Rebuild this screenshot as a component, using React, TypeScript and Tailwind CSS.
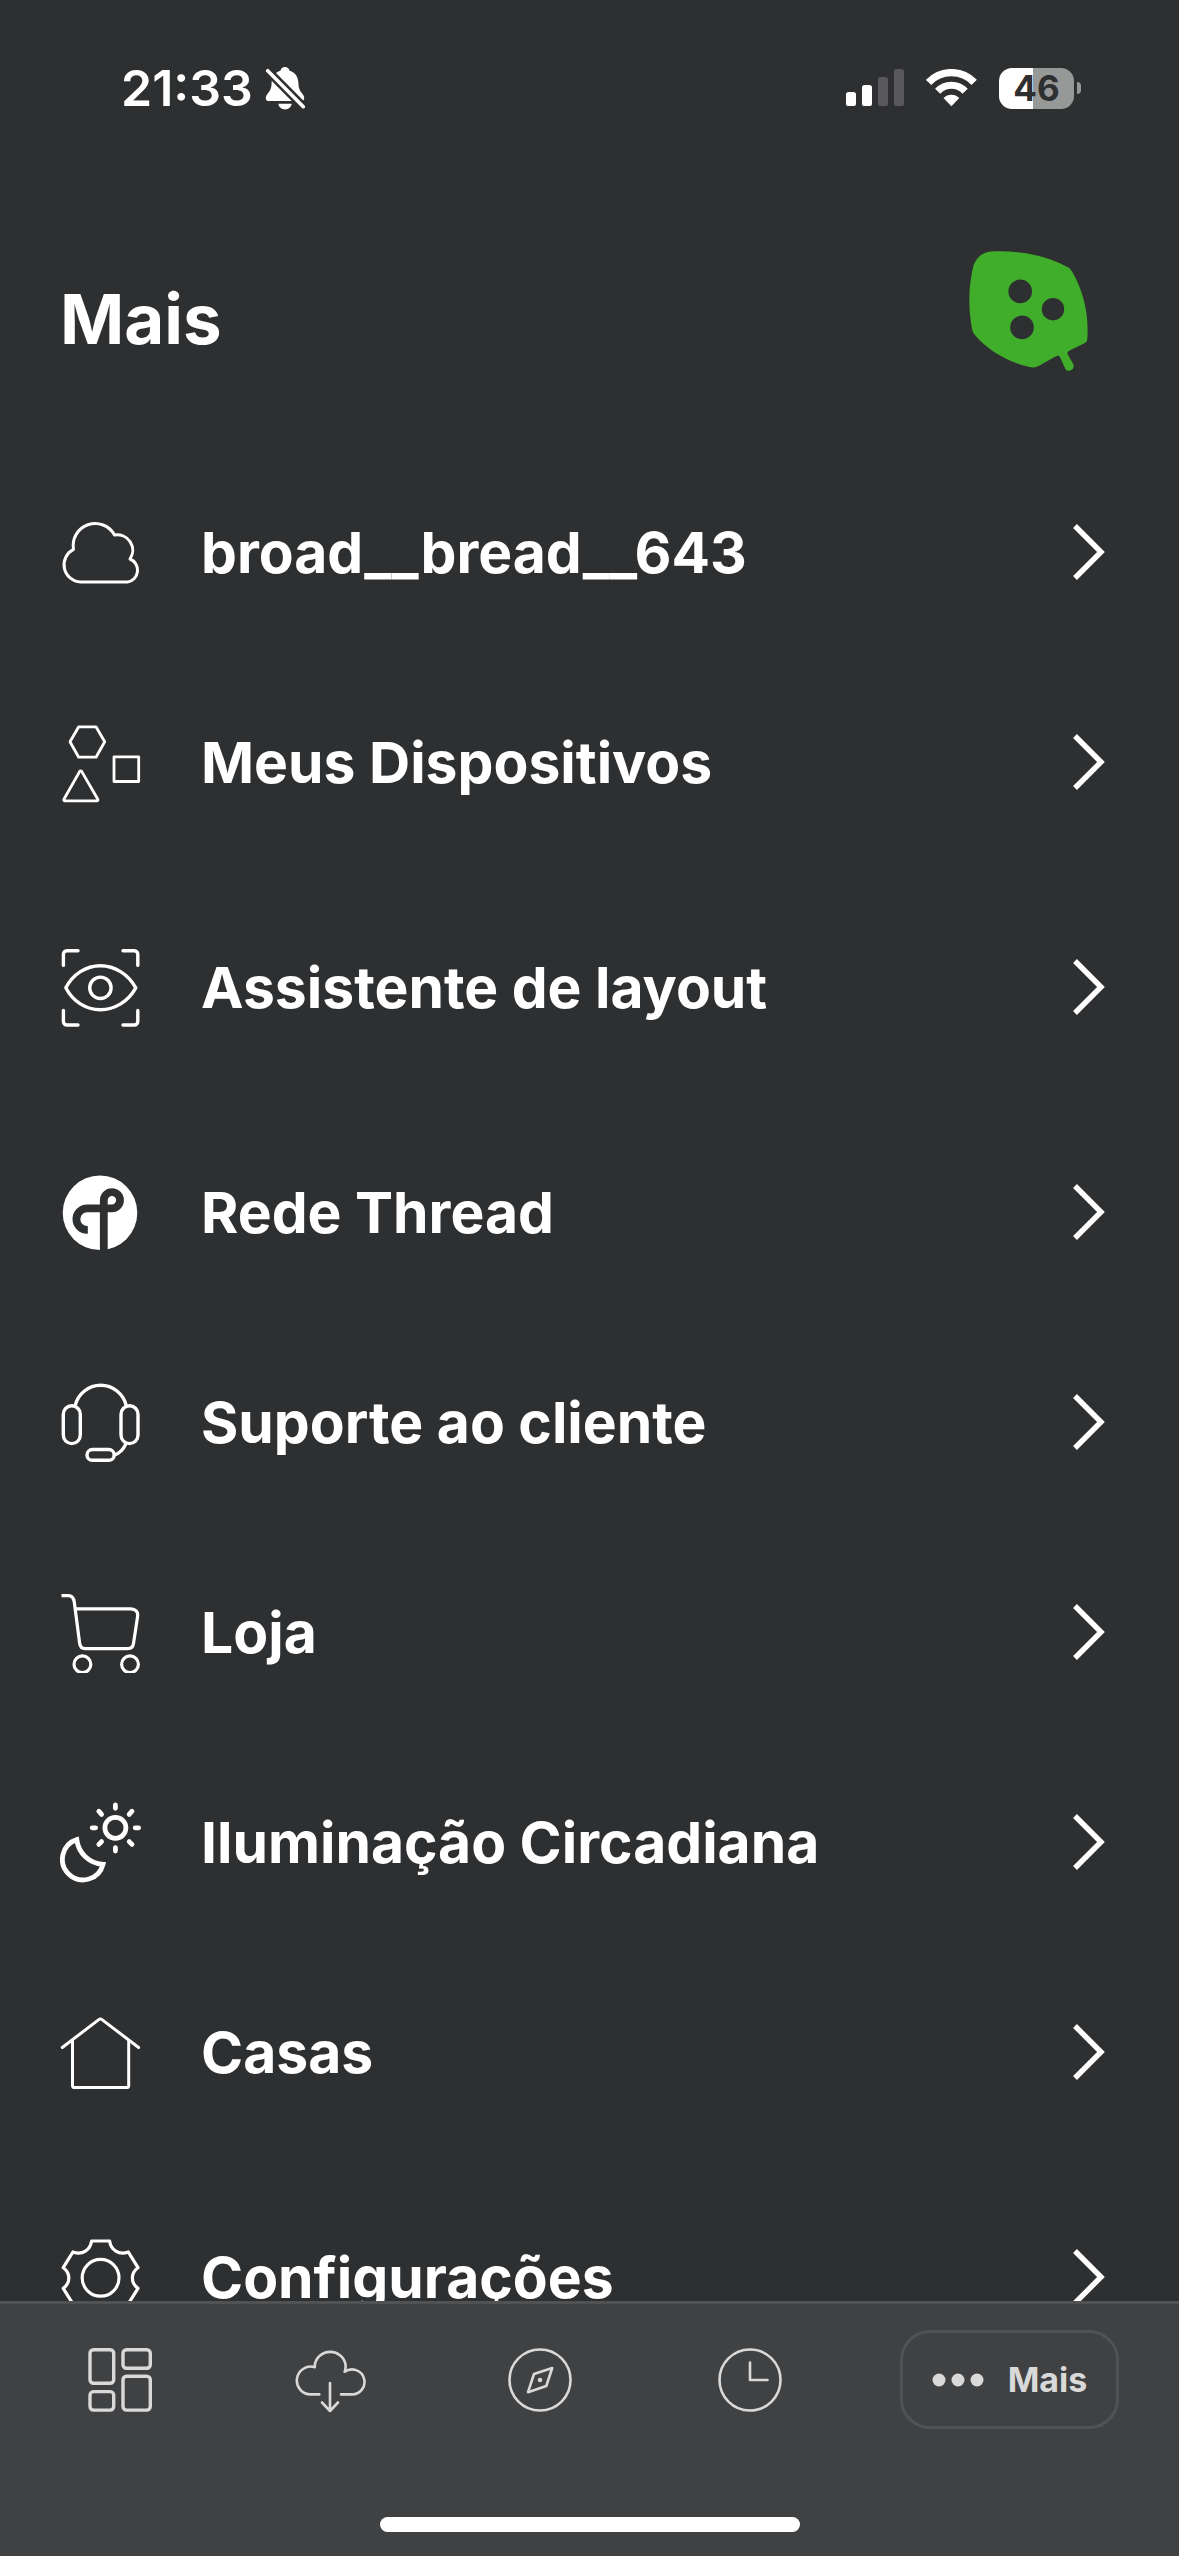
import React from 'react';

function CloudIcon() {
  return <path strokeWidth="3" d="M20.5 70A17.3 17.3 0 0 1 13.5 37.3A22 22 0 0 1 54.5 23A15.5 15.5 0 0 1 70 47A12 12 0 0 1 67.5 70Z" />;
}

function DevicesIcon() {
  return (
    <g strokeWidth="2.8">
      <path d="M18.7 4.8H36L44.7 19.8L36 35.2H18.7L10 19.8Z" />
      <rect x="54" y="34.8" width="24.7" height="24.7" />
      <path d="M21.8 49.6a1.3 1.3 0 0 0-2.2 0L3.9 77.2a1.1 1.1 0 0 0 1 1.7H36.8a1.1 1.1 0 0 0 1-1.7Z" />
    </g>
  );
}

function LayoutIcon() {
  return (
    <g strokeWidth="3.4">
      <path d="M3.4 18.4V7.3A3.5 3.5 0 0 1 6.9 3.8H18M63 3.8H74.3A3.5 3.5 0 0 1 77.8 7.3V18.4M77.8 63.4V74.5A3.5 3.5 0 0 1 74.3 78H63M18 78H6.9A3.5 3.5 0 0 1 3.4 74.5V63.4" />
      <path d="M5.8 40.8C13 27 26 18.7 40.4 18.7S68 27 75.8 40.8C68 54.6 55 62.7 40.4 62.7S13 54.6 5.8 40.8Z" />
      <circle cx="40.4" cy="40.8" r="10.7" />
    </g>
  );
}

function ThreadIcon() {
  return (
    <>
      <circle cx="40" cy="40.8" r="37.3" fill="white" stroke="none" />
      <path
        d="M43.8 82V28.1a8.1 8.1 0 1 1 8.1 8.2H27.2a10.8 10.8 0 0 0 0 21.6h0.6"
        stroke="#2e2f31"
        strokeWidth="7.8"
        strokeLinecap="butt"
      />
    </>
  );
}

function SupportIcon() {
  return (
    <g strokeWidth="3.4">
      <rect x="3.3" y="23.8" width="17" height="37.8" rx="8.5" />
      <rect x="61" y="23.8" width="17" height="37.8" rx="8.5" />
      <rect x="27" y="67.5" width="27.2" height="10.8" rx="5.4" />
      <path d="M15.2 23.5A26.2 26.2 0 0 1 66.2 23.5M66 61.6Q62 70.5 54.4 73" />
    </g>
  );
}

function CartIcon() {
  return (
    <g strokeWidth="3.2" strokeLinecap="butt">
      <path d="M1.5 3.6H8.2C12 3.6 13.8 6.2 14.3 10.2L19.6 51C20 54.8 22 56.6 25.3 56.6H67.8C71 56.6 73 54.8 73.5 51.5L77.6 24.4C78.3 19.8 75.3 16.8 71 16.8H15.3" />
      <circle cx="22.4" cy="72.2" r="8.4" />
      <circle cx="70" cy="72.2" r="8.4" />
    </g>
  );
}

function CircadianIcon() {
  return (
    <g strokeWidth="4.8">
      <circle cx="55.4" cy="25.8" r="10.5" />
      <path d="M55.4 2.9V6.3M55.4 45.6V49M32.2 25.8H35.6M75.2 25.8H78.6M38.8 9.2L41.6 12.4M72 9.2L69.2 12.4M38.8 42.4L41.6 39.6M72 42.4L69.2 39.6" />
      <path strokeLinejoin="miter" d="M16.8 37.6A20.6 20.6 0 1 0 43 62.3A28 28 0 0 1 16.8 37.6Z" />
    </g>
  );
}

function HomeIcon() {
  return (
    <g strokeWidth="3">
      <path d="M2.3 35.5L38.8 7.6a2.6 2.6 0 0 1 3.2 0L78.6 35.5" />
      <path d="M12.5 28.5V73.4a2.2 2.2 0 0 0 2.2 2.2H66.5a2.2 2.2 0 0 0 2.2-2.2V28.5" />
    </g>
  );
}

function GearIcon() {
  return (
    <g strokeWidth="3.2">
      <path d="M31.6 4H49.6C51 13 58.5 18.5 68.3 15L78 30.7C70.5 36 70.5 46 78 51.3L68.3 66.8C58.5 63.2 51 68.6 49.6 77.6H31.6C30.2 68.6 22.7 63.2 12.9 66.8L3.2 51.3C10.7 46 10.7 36 3.2 30.7L12.9 15C22.7 18.5 30.2 13 31.6 4Z" />
      <circle cx="40.6" cy="40.8" r="18.4" />
    </g>
  );
}

const menu = [
  { label: 'broad__bread__643', icon: CloudIcon, newGroup: false },
  { label: 'Meus Dispositivos', icon: DevicesIcon, newGroup: false },
  { label: 'Assistente de layout', icon: LayoutIcon, newGroup: true },
  { label: 'Rede Thread', icon: ThreadIcon, newGroup: true },
  { label: 'Suporte ao cliente', icon: SupportIcon, newGroup: false },
  { label: 'Loja', icon: CartIcon, newGroup: false },
  { label: 'Iluminação Circadiana', icon: CircadianIcon, newGroup: false },
  { label: 'Casas', icon: HomeIcon, newGroup: false },
  { label: 'Configurações', icon: GearIcon, newGroup: true }
];

const tabs = [
  {
    label: 'Painel',
    icon: (
      <g strokeWidth="3.4">
        <rect x="6" y="5.7" width="23.7" height="33.6" rx="3.5" />
        <rect x="39" y="5.7" width="27.3" height="18.6" rx="3.5" />
        <rect x="6" y="47.6" width="23.7" height="18.5" rx="3.5" />
        <rect x="39" y="32.3" width="27.3" height="33.8" rx="3.5" />
      </g>
    )
  },
  {
    label: 'Baixar',
    icon: (
      <g strokeWidth="2.6">
        <path d="M25.3 50.4H16.7A13.9 13.9 0 1 1 20.8 23.2V21A15.6 15.6 0 0 1 51.6 21Q51.8 24.5 50.7 27.8A12.5 12.5 0 1 1 57 50.4H47" />
        <path d="M36 39V67M28 58.5L36 67L44 58.5" />
      </g>
    )
  },
  {
    label: 'Explorar',
    icon: (
      <g strokeWidth="2.6">
        <circle cx="36" cy="36" r="30.5" />
        <path d="M48.2 24L42.3 42L24 48.2L30 30Z" />
        <circle cx="36" cy="36" r="2.3" fill="#d9d9d9" stroke="none" />
      </g>
    )
  },
  {
    label: 'Agenda',
    icon: (
      <g strokeWidth="2.6">
        <circle cx="36" cy="36" r="30.5" />
        <path d="M36 18.5V36H53.5" />
      </g>
    )
  }
];

function StatusBar() {
  const battery = 46;

  return (
    <div className="flex h-44 shrink-0 items-center justify-between pr-[98px] pl-[121px]">
      <div className="flex items-center gap-3 text-[50px] leading-none font-semibold">
        <span>21:33</span>
        <svg width="40" height="44" viewBox="0 0 40 44" aria-hidden="true">
          <path
            fill="white"
            d="M20 1C17.5 1 16 2.6 15.6 4.4C9.5 6.5 6.8 11 6.6 17C6.5 24 4 25.5 1.5 29.5C0 32.5 1 35 3.5 35H36.5C39 35 40 32.5 38.5 29.5C36 25.5 33.5 24 33.4 17C33.2 11 30.5 6.5 24.4 4.4C24 2.6 22.5 1 20 1Z"
          />
          <path fill="white" d="M13.3 37.8H26.7C26.2 41.2 23.6 43.4 20 43.4S13.8 41.2 13.3 37.8Z" />
          <path d="M0 2L41 43.4" stroke="#2e2f31" strokeWidth="8.6" />
          <path d="M2.7 4.7L38.3 40.7" stroke="white" strokeWidth="3.6" strokeLinecap="round" />
        </svg>
      </div>
      <div className="flex items-center gap-[22px]">
        <svg width="58" height="38" viewBox="0 0 58 38" aria-hidden="true">
          <rect x="0" y="23" width="10" height="14" rx="2.6" fill="white" />
          <rect x="16" y="16" width="10" height="21" rx="2.6" fill="white" />
          <rect x="32" y="8" width="10" height="29" rx="2.6" fill="#59595b" />
          <rect x="48" y="0" width="10" height="37" rx="2.6" fill="#59595b" />
        </svg>
        <svg width="51" height="38" viewBox="0 0 51 38" fill="none" aria-hidden="true">
          <path d="M2.6 13.4A31.5 31.5 0 0 1 48.2 13.4" stroke="white" strokeWidth="7.4" />
          <path d="M11.7 22.2A18.8 18.8 0 0 1 39.1 22.2" stroke="white" strokeWidth="7.2" />
          <path fill="white" d="M25.4 37.2L17.5 29A11 11 0 0 1 33.3 29Z" />
        </svg>
        <div className="flex items-center gap-[3px]">
          <div
            className="flex h-[41px] w-[75px] items-center justify-center rounded-[13px] text-[35px] leading-none font-bold text-[#2e2f31]"
            style={{ background: `linear-gradient(to right, #ffffff ${battery}%, #979998 ${battery}%)` }}
          >
            {battery}
          </div>
          <span className="h-3 w-1 rounded-r-full bg-[#979998]" />
        </div>
      </div>
    </div>
  );
}

function LeafLogo() {
  return (
    <svg width="120" height="121" viewBox="0 0 120 121" aria-hidden="true">
      <path
        fill="#40ae2a"
        d="M22 0.4C50 -1 76 4 99.5 16.5C101 17.5 102 19 103 20.5C115 41 120 64 118.3 88C118.2 90 117 91.5 115 92.5L101.5 99C98.5 100.5 97.8 101.8 99 104L104.2 113C106.5 118 100 122.5 96.3 118L91.2 106.5C90 104.5 88.8 104.2 87 105.2L73 113C68.5 115.8 65.5 117.3 60.5 116C38 110.5 19.5 100 5.5 83.5C3.8 81.5 3.2 79 2.8 77C-1 55 -0.5 34 4.6 14C8 6 13.5 1.2 22 0.4Z"
      />
      <g fill="#2e2f31">
        <circle cx="51.2" cy="40.4" r="11.8" />
        <circle cx="84" cy="58.2" r="11.2" />
        <circle cx="53" cy="76.4" r="11.8" />
      </g>
    </svg>
  );
}

export default function App() {
  return (
    <div className="flex h-screen flex-col bg-[#2e2f31] font-['Inter',sans-serif] font-bold text-white">
      <StatusBar />

      <header className="flex h-[271px] shrink-0 items-center justify-between pr-[90px] pl-[60px]">
        <h1 className="pt-4 text-[69px] leading-none">Mais</h1>
        <LeafLogo />
      </header>

      <main className="min-h-0 flex-1 overflow-hidden">
        <ul>
          {menu.map(({ label, icon: Icon, newGroup }) => (
            <li key={label} className={newGroup ? 'mt-[15px]' : ''}>
              <button className="flex h-[210px] w-full items-center gap-[60px] px-[60px] text-left text-[57px] leading-none">
                <svg
                  width="81"
                  height="81"
                  viewBox="0 0 81 81"
                  fill="none"
                  stroke="white"
                  strokeLinecap="round"
                  strokeLinejoin="round"
                  className="shrink-0"
                  aria-hidden="true"
                >
                  <Icon />
                </svg>
                <span className="flex-1">{label}</span>
                <svg width="60" height="60" viewBox="0 0 60 60" fill="none" stroke="white" strokeWidth="5.4" aria-hidden="true">
                  <path d="M16 4L42 30L16 56" />
                </svg>
              </button>
            </li>
          ))}
        </ul>
      </main>

      <footer className="shrink-0 border-t-[3px] border-[#515254] bg-[#404143]">
        <nav className="flex items-center px-[15px] pt-[26px]">
          {tabs.map(tab => (
            <button key={tab.label} aria-label={tab.label} className="flex flex-1 justify-center">
              <svg
                width="72"
                height="72"
                viewBox="0 0 72 72"
                fill="none"
                stroke="#d9d9d9"
                strokeLinecap="round"
                strokeLinejoin="round"
              >
                {tab.icon}
              </svg>
            </button>
          ))}
          <button className="mx-[45px] flex h-[99px] w-[219px] items-center justify-center gap-6 rounded-[30px] border-[3px] border-[#515254] text-[34px] leading-none text-[#d9d9d9]">
            <svg width="52" height="14" viewBox="0 0 52 14" fill="#d9d9d9" aria-hidden="true">
              <circle cx="7" cy="7" r="6.5" />
              <circle cx="26" cy="7" r="6.5" />
              <circle cx="45" cy="7" r="6.5" />
            </svg>
            <span>Mais</span>
          </button>
        </nav>
        <div className="flex justify-center pt-[88px] pb-6">
          <div className="h-[15px] w-[420px] rounded-full bg-white" />
        </div>
      </footer>
    </div>
  );
}
